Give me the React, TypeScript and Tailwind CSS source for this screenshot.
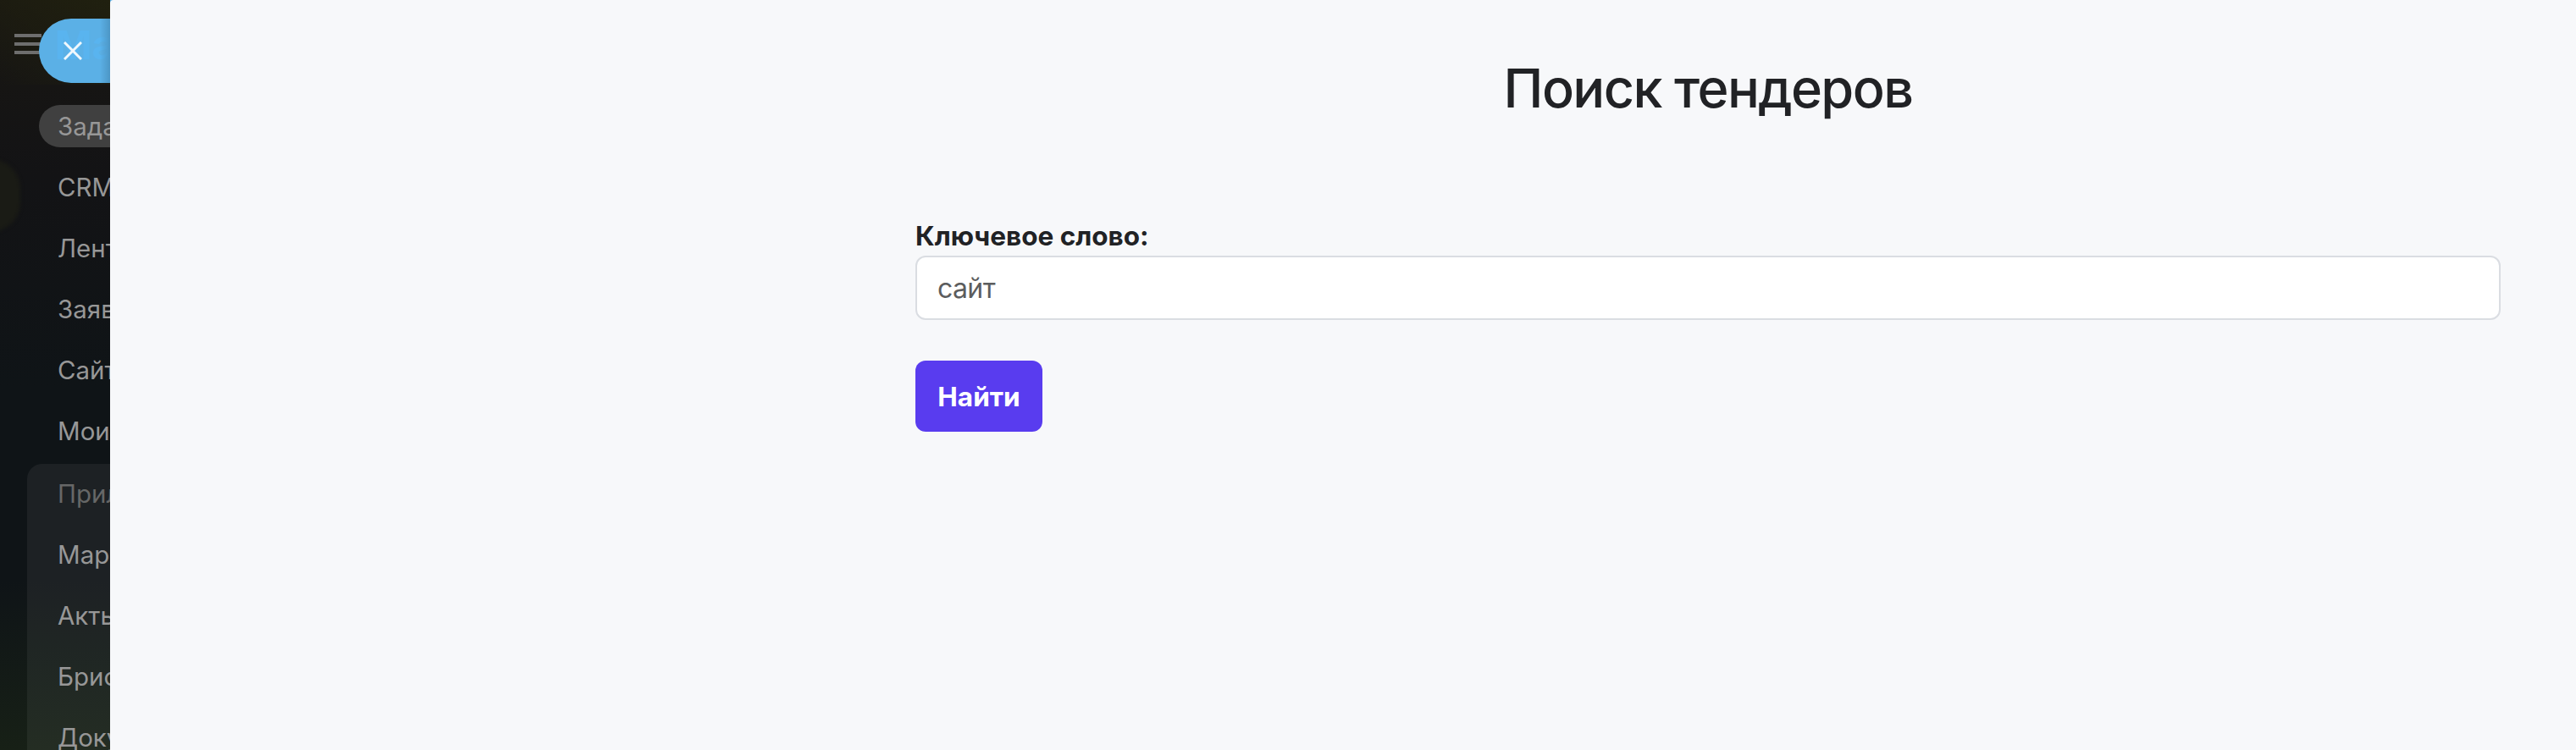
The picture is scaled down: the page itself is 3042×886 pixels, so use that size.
import React from 'react';
import { clsx } from 'clsx';

const mainItems = ['Задачи', 'CRM', 'Лента', 'Заявки', 'Сайты', 'Мои'];
const appItems = ['Маркет', 'Акты', 'Брифы', 'Документы'];

function MenuItem({ label, active, muted }: { label: string; active?: boolean; muted?: boolean }) {
  return (
    <li
      className={clsx(
        'flex h-[50px] w-[440px] shrink-0 items-center rounded-full pl-[22px] pt-[2px] text-[29.5px] leading-none whitespace-nowrap',
        muted ? 'text-[#666767]' : 'text-[#979797]',
        active && 'bg-[#404040]'
      )}
    >
      {label}
    </li>
  );
}

function Sidebar() {
  return (
    <aside className="relative h-[886px] w-[130px] shrink-0 overflow-hidden bg-[#0f1417]">
      <div className="absolute inset-x-0 top-0 h-[460px] bg-linear-to-b from-[#191712] via-[#131315] via-45% to-[#0f1417]" />
      <div className="absolute inset-x-0 bottom-0 h-[200px] bg-linear-to-b from-[#0f1417] to-[#172016]" />
      <div className="absolute -left-[46px] top-[188px] h-[86px] w-[70px] rounded-full bg-[#1a1b15] blur-[2px]" />
      <div className="absolute left-0 top-0 h-[100px] w-[130px] bg-linear-to-bl from-[#20200f] to-transparent" />

      <div className="relative flex h-[124px] pl-[17px] pt-[40px]">
        <div className="flex w-8 shrink-0 flex-col gap-[6px]">
          <span className="h-1 bg-[#6e6e6e]" />
          <span className="h-1 bg-[#6e6e6e]" />
          <span className="h-1 bg-[#6e6e6e]" />
        </div>
      </div>

      {/* Close label of the slider */}
      <button className="absolute left-[46px] top-[22px] flex h-[76px] w-[120px] items-center rounded-l-full bg-[#5bb0e6] pb-[16px] pl-[19px]">
        <span className="text-[47px] font-bold leading-none text-[#59b4ef]">Ма</span>
        <span className="absolute right-[36px] top-0 h-full w-3 bg-linear-to-r from-transparent to-[#4c96c5]" />
        <svg className="absolute left-[29px] top-[27px]" width="22" height="22" viewBox="0 0 22 22" fill="none" stroke="#f0f8fd" strokeWidth="3">
          <path d="M1 1L21 21M21 1L1 21" />
        </svg>
      </button>

      <ul className="relative flex flex-col gap-[22px] pl-[46px]">
        {mainItems.map((item, i) => (
          <MenuItem key={item} label={item} active={i === 0} />
        ))}
      </ul>

      <div className="relative ml-[32px] mt-[14px] h-[400px] rounded-tl-[18px] bg-white/6 pl-[14px] pt-[10px]">
        <ul className="flex flex-col gap-[22px]">
          <MenuItem label="Приложения" muted />
          {appItems.map((item) => (
            <MenuItem key={item} label={item} />
          ))}
        </ul>
      </div>
    </aside>
  );
}

function SearchForm() {
  return (
    <form className="flex w-[1872px] flex-col items-start" onSubmit={(e) => e.preventDefault()}>
      <h1 className="self-center text-[63px] font-medium leading-[80px] tracking-[-1.6px] text-[#212225]">Поиск тендеров</h1>
      <label htmlFor="keyword" className="mt-[111px] text-[31.5px] font-bold leading-[47px] text-[#212225]">
        Ключевое слово:
      </label>
      <input
        id="keyword"
        type="text"
        defaultValue="сайт"
        className="h-[76px] w-full rounded-[12px] border-2 border-[#dadde2] bg-white px-[24px] text-[32px] tracking-[-0.6px] text-[#5c5d5e] outline-none"
      />
      <button className="mt-[48px] h-[84px] w-[150px] rounded-[12px] bg-[#593cef] pt-[2px] text-[31.5px] font-bold text-white">
        Найти
      </button>
    </form>
  );
}

export default function App() {
  return (
    <div className="flex h-[886px] w-[3042px] overflow-hidden bg-[#5bb0e6] font-['Inter','Liberation_Sans',sans-serif]">
      <Sidebar />
      <main className="flex grow justify-end rounded-tl-[4px] bg-[#f7f8fa] pr-[89px] pt-[64px]">
        <SearchForm />
      </main>
    </div>
  );
}
